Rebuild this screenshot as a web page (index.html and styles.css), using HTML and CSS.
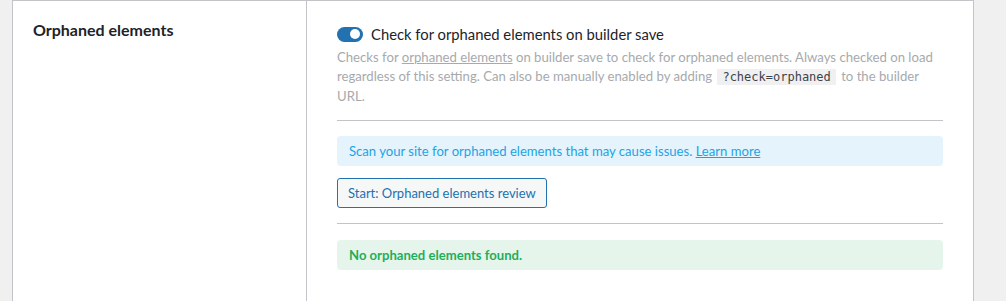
FILE: index.html
```html
<!DOCTYPE html>
<html lang="en">
<head>
    <meta charset="UTF-8">
    <meta name="viewport" content="width=device-width, initial-scale=1.0">
    <title>Orphaned elements</title>
    <link rel="stylesheet" href="styles.css">
</head>
<body>
    <div class="settings-wrap">
        <div class="settings-row">
            <div class="settings-label">Orphaned elements</div>

            <div class="settings-field">
                <label class="toggle-row">
                    <span class="toggle"><span class="knob"></span></span>
                    Check for orphaned elements on builder save
                </label>

                <p class="description">
                    Checks for <a href="#">orphaned elements</a> on builder save to check for orphaned elements. Always checked on load regardless of this setting. Can also be manually enabled by adding <code>?check=orphaned</code> to the builder URL.
                </p>

                <hr class="divider">

                <div class="notice info">
                    Scan your site for orphaned elements that may cause issues. <a href="#">Learn more</a>
                </div>

                <button class="review-btn">Start: Orphaned elements review</button>

                <hr class="divider">

                <div class="notice success">No orphaned elements found.</div>
            </div>
        </div>
    </div>
</body>
</html>
```

FILE: styles.css
```css
* {
    margin: 0;
    padding: 0;
    box-sizing: border-box;
}

body {
    font-family: 'Lato', 'Liberation Sans', sans-serif;
    background: #f0f0f1;
    color: #1d2327;
    font-size: 13px;
}

.settings-wrap {
    padding-left: 12px;
    width: 974px;
}

.settings-row {
    display: flex;
    background: #fff;
    border: 1px solid #c3c4c7;
    min-height: 320px;
}

.settings-label {
    width: 294px;
    border-right: 1px solid #c3c4c7;
    padding: 19px 20px;
    font-size: 16px;
    font-weight: 700;
    line-height: 20px;
}

.settings-field {
    flex: 1;
    padding: 23px 30px 0 30px;
}

.toggle-row {
    display: flex;
    align-items: center;
    gap: 8px;
    font-size: 14.8px;
    line-height: 20px;
}

.toggle {
    width: 26px;
    height: 15px;
    border-radius: 8px;
    background: #2271b1;
    display: flex;
    align-items: center;
    justify-content: flex-end;
    padding-right: 3px;
}

.knob {
    width: 10px;
    height: 10px;
    border-radius: 50%;
    background: #fff;
}

.description {
    margin-top: 4px;
    color: #a7aaad;
    font-size: 13.15px;
    line-height: 19px;
}

.description a {
    color: #a7aaad;
}

code {
    font-family: 'DejaVu Sans Mono', monospace;
    font-size: 12px;
    color: #3c434a;
    background: #f0f0f1;
    padding: 1px 5px;
    margin: 0 2px;
}

.divider {
    border: none;
    border-top: 1px solid #c3c4c7;
    margin-top: 14px;
}

.notice {
    margin-top: 15px;
    padding: 6px 12px;
    border-radius: 4px;
    font-size: 13.1px;
    line-height: 18px;
}

.notice.info {
    background: #e5f3fd;
    color: #1ca3e6;
}

.notice.info a {
    color: #1ca3e6;
}

.notice.success {
    margin-top: 16px;
    background: #e6f5eb;
    color: #1fae5a;
    font-weight: 700;
}

.review-btn {
    margin-top: 12px;
    font-family: inherit;
    font-size: 13px;
    color: #2271b1;
    background: #f6f7f7;
    border: 1px solid #2271b1;
    border-radius: 3px;
    padding: 0 10px;
    height: 30px;
    line-height: 28px;
    cursor: pointer;
}

.review-btn + .divider {
    margin-top: 15px;
}
```
